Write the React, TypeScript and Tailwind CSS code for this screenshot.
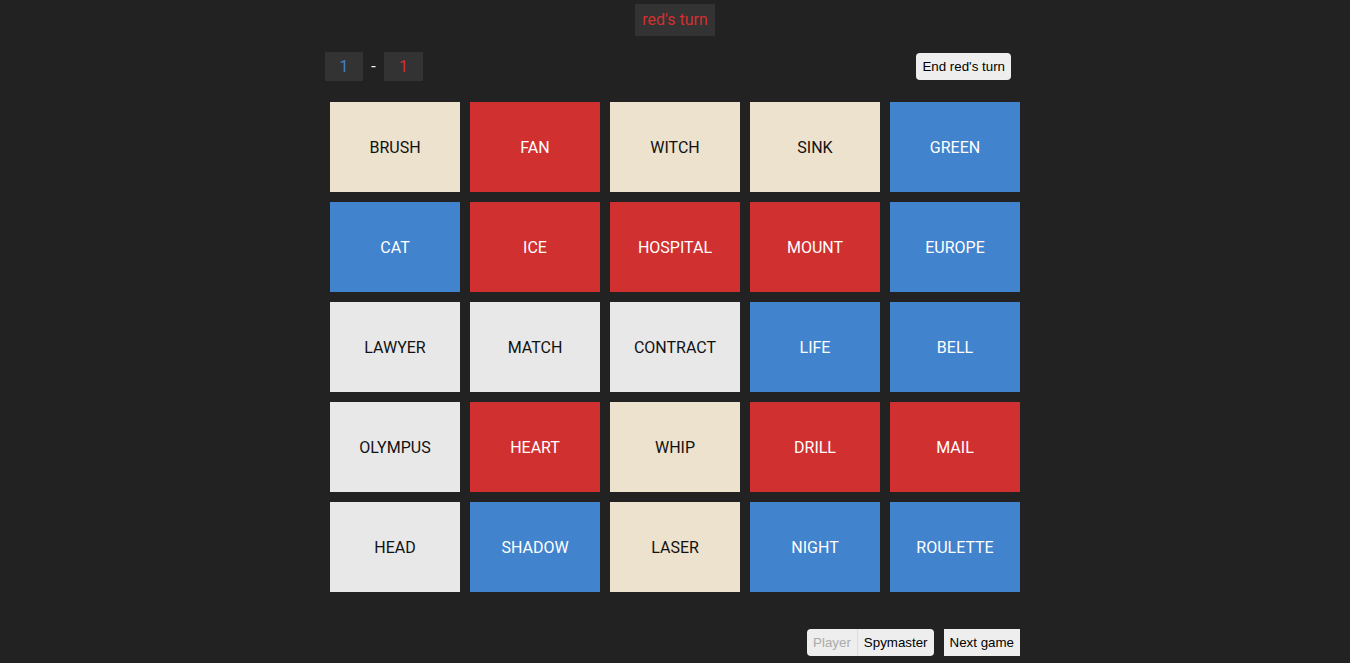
const words: [string, string][] = [
  ["BRUSH", "n"], ["FAN", "r"], ["WITCH", "n"], ["SINK", "n"], ["GREEN", "b"],
  ["CAT", "b"], ["ICE", "r"], ["HOSPITAL", "r"], ["MOUNT", "r"], ["EUROPE", "b"],
  ["LAWYER", "g"], ["MATCH", "g"], ["CONTRACT", "g"], ["LIFE", "b"], ["BELL", "b"],
  ["OLYMPUS", "g"], ["HEART", "r"], ["WHIP", "n"], ["DRILL", "r"], ["MAIL", "r"],
  ["HEAD", "g"], ["SHADOW", "b"], ["LASER", "n"], ["NIGHT", "b"], ["ROULETTE", "b"],
];

const cardColor: Record<string, string> = {
  n: "bg-[#ece2cd] text-[#111]",
  r: "bg-[#d13030] text-white",
  b: "bg-[#4183cc] text-white",
  g: "bg-[#e8e8e8] text-[#111]",
};

export default function App() {
  return (
    <div className="w-full h-[663px] bg-[#222222] overflow-hidden font-['Roboto',sans-serif]">
      <div className="flex justify-center pt-1">
        <div className="h-8 px-[7px] bg-[#333333] text-[#d13030] text-base flex items-center">red's turn</div>
      </div>

      <div className="w-[700px] mx-auto mt-4">
        <div className="flex items-center justify-between">
          <div className="flex items-center">
            <div className="w-[38px] h-[29px] bg-[#333333] text-[#4183cc] flex items-center justify-center text-base">1</div>
            <div className="w-[21px] text-center text-white text-base">-</div>
            <div className="w-[39px] h-[29px] bg-[#333333] text-[#d13030] flex items-center justify-center text-base">1</div>
          </div>
          <button className="mr-[14px] h-[27px] px-[6px] rounded-[4px] bg-[#eeeeee] text-black text-[13.33px] font-['Liberation_Sans',sans-serif]">
            End red's turn
          </button>
        </div>

        <div className="grid grid-cols-5 gap-[10px] px-[5px] mt-[21px]">
          {words.map(([w, c]) => (
            <div key={w} className={`h-[90px] pt-[2px] flex items-center justify-center text-base ${cardColor[c]}`}>
              {w}
            </div>
          ))}
        </div>

        <div className="flex justify-end gap-[10px] pr-[5px] mt-[37px] font-['Liberation_Sans',sans-serif] text-[13.33px]">
          <div className="flex h-[27px] rounded-[4px] bg-[#eeeeee] overflow-hidden">
            <span className="px-[6px] flex items-center text-[#aaaaaa] border-r border-[#dddddd]">Player</span>
            <span className="px-[6px] flex items-center text-black">Spymaster</span>
          </div>
          <button className="h-[27px] px-[6px] bg-[#eeeeee] text-black">Next game</button>
        </div>
      </div>
    </div>
  );
}
